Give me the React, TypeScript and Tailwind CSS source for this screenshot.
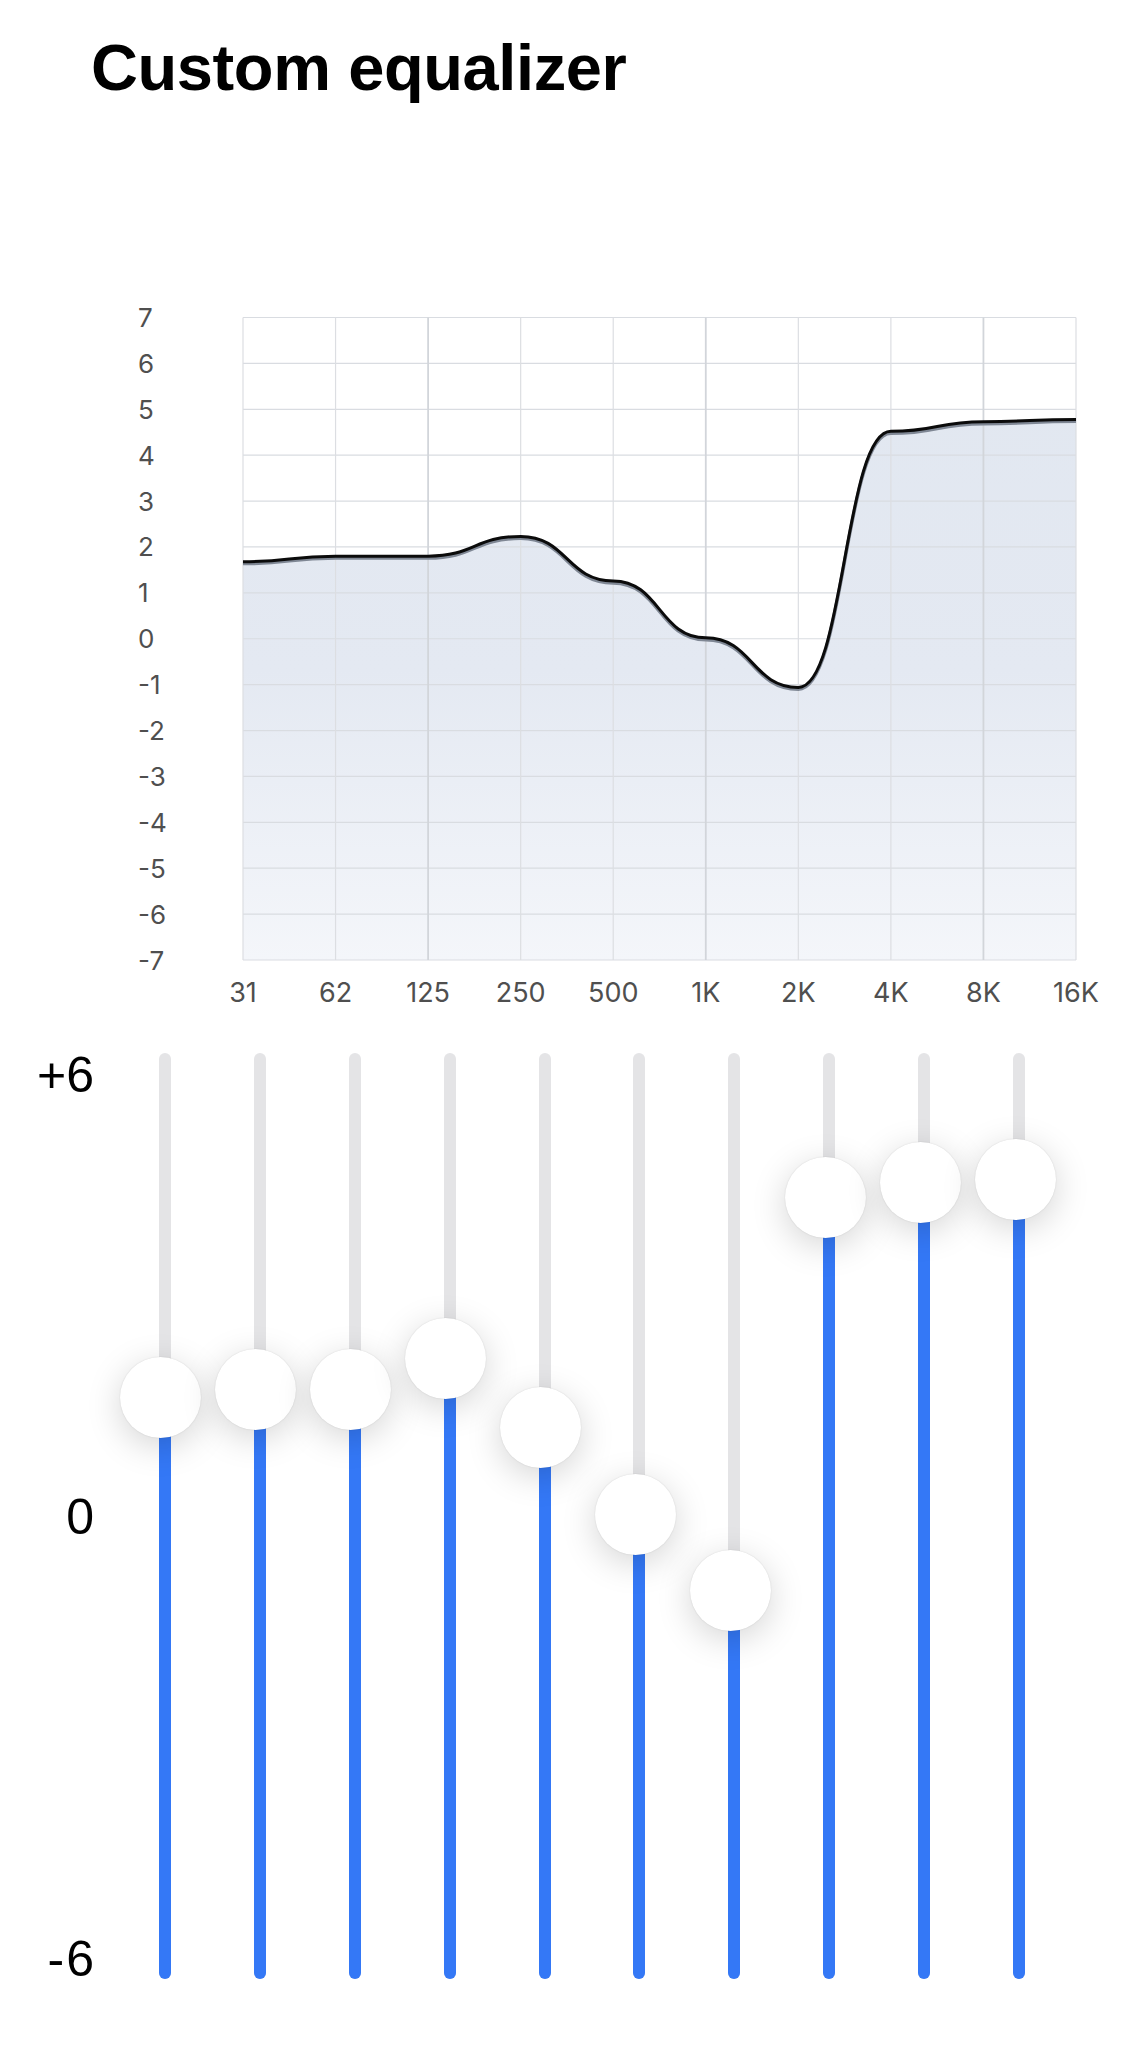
const bands = ['31', '62', '125', '250', '500', '1K', '2K', '4K', '8K', '16K']
const gains = [1.68, 1.8, 1.8, 2.23, 1.26, 0.02, -1.06, 4.52, 4.73, 4.78]

const PLOT_LEFT = 243
const PLOT_RIGHT = 1076
const PLOT_TOP = 317.5
const PLOT_BOTTOM = 960
const colX = (i: number) => PLOT_LEFT + ((PLOT_RIGHT - PLOT_LEFT) / 9) * i
const valY = (v: number) => PLOT_TOP + ((7 - v) / 14) * (PLOT_BOTTOM - PLOT_TOP)

function curvePath(offset = 0) {
  let d = `M ${colX(0)} ${valY(gains[0]) + offset}`
  for (let i = 0; i < gains.length - 1; i++) {
    const x0 = colX(i)
    const x1 = colX(i + 1)
    const y0 = valY(gains[i]) + offset
    const y1 = valY(gains[i + 1]) + offset
    const dx = (x1 - x0) * 0.5
    d += ` C ${x0 + dx} ${y0}, ${x1 - dx} ${y1}, ${x1} ${y1}`
  }
  return d
}

function ResponseChart() {
  const ticks = Array.from({ length: 15 }, (_, i) => 7 - i)
  const line = curvePath()
  return (
    <svg width={1125} height={720} viewBox="0 300 1125 720" className="block">
      <defs>
        <linearGradient id="eqFill" x1="0" y1={PLOT_TOP} x2="0" y2={PLOT_BOTTOM} gradientUnits="userSpaceOnUse">
          <stop offset="0" stopColor="#e1e7f0" />
          <stop offset="0.55" stopColor="#e4e9f2" />
          <stop offset="1" stopColor="#f4f6fa" />
        </linearGradient>
      </defs>
      <path d={`${line} L ${PLOT_RIGHT} ${PLOT_BOTTOM} L ${PLOT_LEFT} ${PLOT_BOTTOM} Z`} fill="url(#eqFill)" />
      {ticks.map((t) => (
        <line key={`h${t}`} x1={PLOT_LEFT} x2={PLOT_RIGHT} y1={valY(t)} y2={valY(t)} stroke="#d9dce1" strokeWidth={1.2} />
      ))}
      {bands.map((b, i) => (
        <line
          key={`v${b}`}
          x1={colX(i)}
          x2={colX(i)}
          y1={PLOT_TOP}
          y2={PLOT_BOTTOM}
          stroke={i === 2 || i === 5 || i === 8 ? '#d2d5da' : '#dcdee2'}
          strokeWidth={i === 2 || i === 5 || i === 8 ? 1.8 : 1.2}
        />
      ))}
      <path d={curvePath(2)} fill="none" stroke="#7f8794" strokeWidth={3.4} />
      <path d={line} fill="none" stroke="#0b0b0b" strokeWidth={3} />
      {ticks.map((t) => (
        <text
          key={`y${t}`}
          x={138}
          y={valY(t)}
          dominantBaseline="central"
          fontFamily="Inter, 'Noto Sans', sans-serif"
          fontSize={26}
          fill="#4f4f4f"
        >
          {t}
        </text>
      ))}
      {bands.map((b, i) => (
        <text
          key={`x${b}`}
          x={colX(i)}
          y={992}
          textAnchor="middle"
          dominantBaseline="central"
          fontFamily="Inter, 'Noto Sans', sans-serif"
          fontSize={27}
          fill="#4f4f4f"
        >
          {b}
        </text>
      ))}
    </svg>
  )
}

const TRACK_H = 926
const THUMB = 81

function BandSlider({ value }: { value: number }) {
  const center = THUMB / 2 + ((6 - value) / 12) * (TRACK_H - THUMB)
  return (
    <div className="relative flex justify-center h-[926px]">
      <div className="relative w-[12px] h-full rounded-full bg-[#e4e4e6]">
        <div
          className="absolute left-0 bottom-0 w-full rounded-b-full bg-[#3478f6]"
          style={{ height: TRACK_H - center }}
        />
      </div>
      <div
        className="absolute left-1/2 ml-[-44.5px] w-[81px] h-[81px] rounded-full bg-white shadow-[0_0_1.5px_rgba(0,0,0,0.14),0_8px_34px_rgba(0,0,0,0.17)]"
        style={{ top: center - THUMB / 2 }}
      />
    </div>
  )
}

export default function App() {
  return (
    <div className="w-[1125px] min-h-[2061px] bg-white overflow-hidden font-['Liberation_Sans',Arial,sans-serif]">
      <div className="h-[300px] pl-[91px] pt-[35px]">
        <h1 className="text-[65px] leading-[66px] font-bold text-black tracking-[-0.4px]">Custom equalizer</h1>
      </div>

      <ResponseChart />

      <div className="flex pt-[33px]">
        <div className="w-[94px] h-[934px] mt-[-3px] flex flex-col justify-between items-end text-[50px] leading-[50px] text-black">
          <span>+6</span>
          <span>0</span>
          <span className="tracking-[2px] mr-[-2px]">-6</span>
        </div>
        <div className="ml-[23.5px] w-[949px] grid grid-cols-10">
          {gains.map((g, i) => (
            <BandSlider key={bands[i]} value={g} />
          ))}
        </div>
      </div>
    </div>
  )
}
